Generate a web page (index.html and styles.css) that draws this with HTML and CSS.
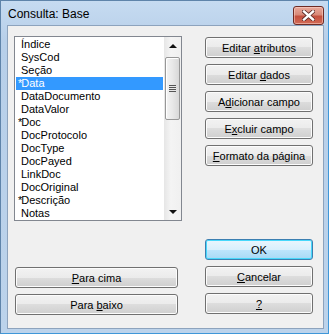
FILE: index.html
```
<!DOCTYPE html>
<html lang="pt">
<head>
    <meta charset="UTF-8">
    <title>Consulta: Base</title>
    <link rel="stylesheet" href="styles.css">
</head>
<body>

<div class="janela">
    <div class="titulo">
        <span class="titulo-texto">Consulta: Base</span>
        <div class="fechar">
            <svg width="13" height="11" viewBox="0 0 13 11">
                <path d="M2 1.5 L11 9.5 M11 1.5 L2 9.5" stroke="#5a2a26" stroke-width="4" stroke-linecap="square"/>
                <path d="M2 1.5 L11 9.5 M11 1.5 L2 9.5" stroke="#ffffff" stroke-width="2.4" stroke-linecap="square"/>
            </svg>
        </div>
    </div>

    <div class="cliente">
        <div class="coluna-esq">
            <div class="lista">
                <ul class="itens">
                    <li>Índice</li>
                    <li>SysCod</li>
                    <li>Seção</li>
                    <li class="selecionado"><span class="ast">*</span>Data</li>
                    <li>DataDocumento</li>
                    <li>DataValor</li>
                    <li><span class="ast">*</span>Doc</li>
                    <li>DocProtocolo</li>
                    <li>DocType</li>
                    <li>DocPayed</li>
                    <li>LinkDoc</li>
                    <li>DocOriginal</li>
                    <li><span class="ast">*</span>Descrição</li>
                    <li>Notas</li>
                </ul>
                <div class="rolagem">
                    <div class="seta"><span class="tri-cima"></span></div>
                    <div class="trilho">
                        <div class="polegar">
                            <div class="grip"></div>
                        </div>
                    </div>
                    <div class="seta"><span class="tri-baixo"></span></div>
                </div>
            </div>

            <div class="mover">
                <button class="botao largo"><u>P</u>ara cima</button>
                <button class="botao largo">Para <u>b</u>aixo</button>
            </div>
        </div>

        <div class="coluna-dir">
            <div class="acoes">
                <button class="botao">Editar <u>a</u>tributos</button>
                <button class="botao">Editar <u>d</u>ados</button>
                <button class="botao">A<u>d</u>icionar campo</button>
                <button class="botao">E<u>x</u>cluir campo</button>
                <button class="botao"><u>F</u>ormato da página</button>
            </div>
            <div class="dialogo">
                <button class="botao padrao">OK</button>
                <button class="botao"><u>C</u>ancelar</button>
                <button class="botao"><u>?</u></button>
            </div>
        </div>
    </div>
</div>

</body>
</html>
```

FILE: styles.css
```
body{
    margin: 0;
    padding: 0;
    background: #ffffff;
}

.janela{
    width: 329px;
    height: 334px;
    box-sizing: border-box;
    border: 1px solid #5f84aa;
    border-right-color: #3f97d8;
    border-bottom-color: #3f97d8;
    background: linear-gradient(#c6dbf1, #b7cfe9 40px, #bcd3eb);
    display: flex;
    flex-direction: column;
    padding: 0 4px 4px 6px;
}

.titulo{
    height: 24px;
    display: flex;
    align-items: center;
    justify-content: space-between;
}

.titulo-texto{
    font-family: "Liberation Sans", Arial, sans-serif;
    font-size: 12px;
    color: #000;
    padding-left: 1px;
    padding-top: 1px;
}

.fechar{
    width: 29px;
    height: 17px;
    margin-top: 4px;
    margin-right: 0px;
    border: 1px solid #6e2b24;
    border-radius: 3px;
    background: linear-gradient(#e9a99b, #d88a79 45%, #c4503e 55%, #d26a55);
    box-shadow: inset 0 0 0 1px rgba(255, 220, 210, 0.5);
    display: flex;
    align-items: center;
    justify-content: center;
}

.cliente{
    flex: 1;
    background: #f0f0f0;
    border: 1px solid #8da3bd;
    display: flex;
    padding: 10px 10px 13px 6px;
    font-family: "Liberation Sans", Arial, sans-serif;
    font-size: 11px;
}

.coluna-esq{
    width: 168px;
    display: flex;
    flex-direction: column;
}

.coluna-dir{
    margin-left: 23px;
    width: 108px;
    display: flex;
    flex-direction: column;
    justify-content: space-between;
    padding-top: 1px;
    padding-bottom: 1px;
}

.lista{
    height: 185px;
    box-sizing: border-box;
    border: 1px solid #828790;
    background: #fff;
    display: flex;
}

.itens{
    flex: 1;
    list-style: none;
    margin: 0;
    padding: 1px;
}

.itens li{
    height: 13px;
    line-height: 13px;
    padding-left: 5px;
    color: #000;
    white-space: nowrap;
}

.itens li.selecionado{
    background: #3399ff;
    color: #fff;
}

.ast{
    margin-left: -3px;
    margin-right: -1px;
}

.rolagem{
    width: 17px;
    display: flex;
    flex-direction: column;
    background: linear-gradient(to right, #e6e6e6, #f4f4f4 40%, #f0f0f0);
}

.seta{
    height: 17px;
    display: flex;
    align-items: center;
    justify-content: center;
}

.tri-cima{
    width: 0;
    height: 0;
    border-left: 4px solid transparent;
    border-right: 4px solid transparent;
    border-bottom: 4px solid #111;
}

.tri-baixo{
    width: 0;
    height: 0;
    border-left: 4px solid transparent;
    border-right: 4px solid transparent;
    border-top: 4px solid #111;
}

.trilho{
    flex: 1;
    padding-top: 3px;
}

.polegar{
    margin: 0 1px;
    height: 63px;
    box-sizing: border-box;
    border: 1px solid #979797;
    border-radius: 2px;
    background: linear-gradient(to right, #f4f4f4, #e8e8e8 50%, #d8d8d8);
    box-shadow: inset 1px 1px 0 #fff;
    display: flex;
    align-items: center;
    justify-content: center;
}

.grip{
    width: 7px;
    height: 7px;
    background: repeating-linear-gradient(#555 0, #555 1px, #e8e8e8 1px, #e8e8e8 2px);
}

.mover{
    margin-top: auto;
    display: flex;
    flex-direction: column;
    gap: 6px;
    padding-left: 1px;
    padding-right: 4px;
}

.acoes, .dialogo{
    display: flex;
    flex-direction: column;
    gap: 6px;
}

.botao{
    height: 21px;
    width: 100%;
    padding: 0;
    border: 1px solid #707070;
    border-radius: 3px;
    background: linear-gradient(#f2f2f2, #ebebeb 50%, #dddddd 50%, #cfcfcf);
    box-shadow: inset 0 0 0 1px #fcfcfc;
    font-family: "Liberation Sans", Arial, sans-serif;
    font-size: 11px;
    color: #000;
    text-align: center;
}

.botao.padrao{
    border-color: #3c7fb1;
    background: linear-gradient(#eaf6fd, #d9f0fc 50%, #bee6fd 50%, #a7d9f5);
    box-shadow: inset 0 0 0 1px #48d8fb;
}
```
